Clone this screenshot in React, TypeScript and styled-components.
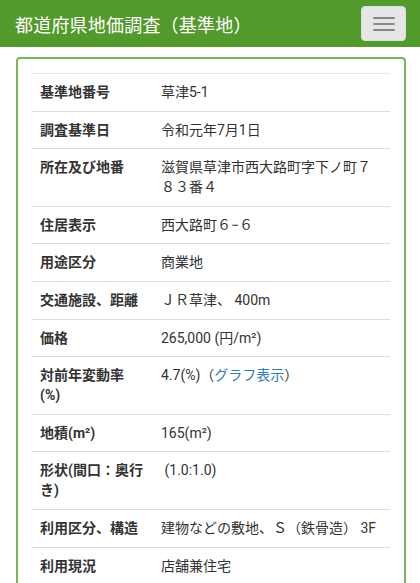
import React from "react";
import styled, { createGlobalStyle } from "styled-components";

const GlobalStyle = createGlobalStyle`
    html, body {
        margin: 0;
        padding: 0;
        background: #fff;
    }
    body {
        font-family: Roboto, "Noto Sans CJK JP", "Noto Sans", sans-serif;
        font-size: 14px;
        color: #333;
    }
`

const Header = styled.header`
    height: 47px;
    background-color: #529a2b;
    display: flex;
    align-items: center;
    justify-content: space-between;
    padding: 0 15px;
    box-sizing: border-box;
`

const Title = styled.h1`
    margin: 0;
    font-size: 18px;
    font-weight: normal;
    color: #fff;
    letter-spacing: 0.2px;
`

const MenuButton = styled.button`
    width: 45px;
    height: 35px;
    margin-right: -1px;
    background-color: #e6e6e6;
    border: 1px solid #ddd;
    border-radius: 4px;
    display: flex;
    flex-direction: column;
    align-items: center;
    justify-content: center;
    gap: 4px;
    padding: 0;
    cursor: pointer;
`

const Bar = styled.span`
    display: block;
    width: 22px;
    height: 2px;
    background-color: #888;
    border-radius: 1px;
`

const Card = styled.div`
    margin: 10px 14px 0 16px;
    border: 2px solid #7ab55c;
    border-bottom: none;
    border-radius: 4px 4px 0 0;
    padding: 14px 14px 0 14px;
`

const Table = styled.table`
    width: 100%;
    table-layout: fixed;
    border-collapse: collapse;
    border-top: 1px solid #e6e6e6;
`

const Row = styled.tr`
    border-bottom: 1px solid #ddd;
`

const Label = styled.th`
    width: 121px;
    box-sizing: border-box;
    text-align: left;
    vertical-align: top;
    font-weight: bold;
    padding: 8px 9px 8.6px 8px;
    line-height: 20px;
`

const Value = styled.td`
    vertical-align: top;
    padding: 8px 8px 8.6px 8px;
    line-height: 20px;
`

const Link = styled.a`
    color: #337ab7;
    text-decoration: none;
`

const rows: { label: React.ReactNode; value: React.ReactNode }[] = [
    { label: "基準地番号", value: "草津5-1" },
    { label: "調査基準日", value: "令和元年7月1日" },
    { label: "所在及び地番", value: "滋賀県草津市西大路町字下ノ町７８３番４" },
    { label: "住居表示", value: "西大路町６−６" },
    { label: "用途区分", value: "商業地" },
    { label: "交通施設、距離", value: "ＪＲ草津、 400m" },
    { label: "価格", value: "265,000 (円/m²)" },
    {
        label: "対前年変動率(%)",
        value: (
            <>
                4.7(%)（<Link href="#">グラフ表示</Link>）
            </>
        ),
    },
    { label: "地積(m²)", value: "165(m²)" },
    { label: "形状(間口：奥行き)", value: "\u00a0(1.0:1.0)" },
    { label: "利用区分、構造", value: "建物などの敷地、Ｓ（鉄骨造） 3F" },
    { label: "利用現況", value: "店舗兼住宅" },
]

const App = () => {
    return (
        <>
            <GlobalStyle />
            <Header>
                <Title>都道府県地価調査（基準地）</Title>
                <MenuButton aria-label="menu">
                    <Bar />
                    <Bar />
                    <Bar />
                </MenuButton>
            </Header>
            <Card>
                <Table>
                    <tbody>
                        {rows.map((r, i) => (
                            <Row key={i}>
                                <Label>{r.label}</Label>
                                <Value>{r.value}</Value>
                            </Row>
                        ))}
                    </tbody>
                </Table>
            </Card>
        </>
    )
}

export default App;
